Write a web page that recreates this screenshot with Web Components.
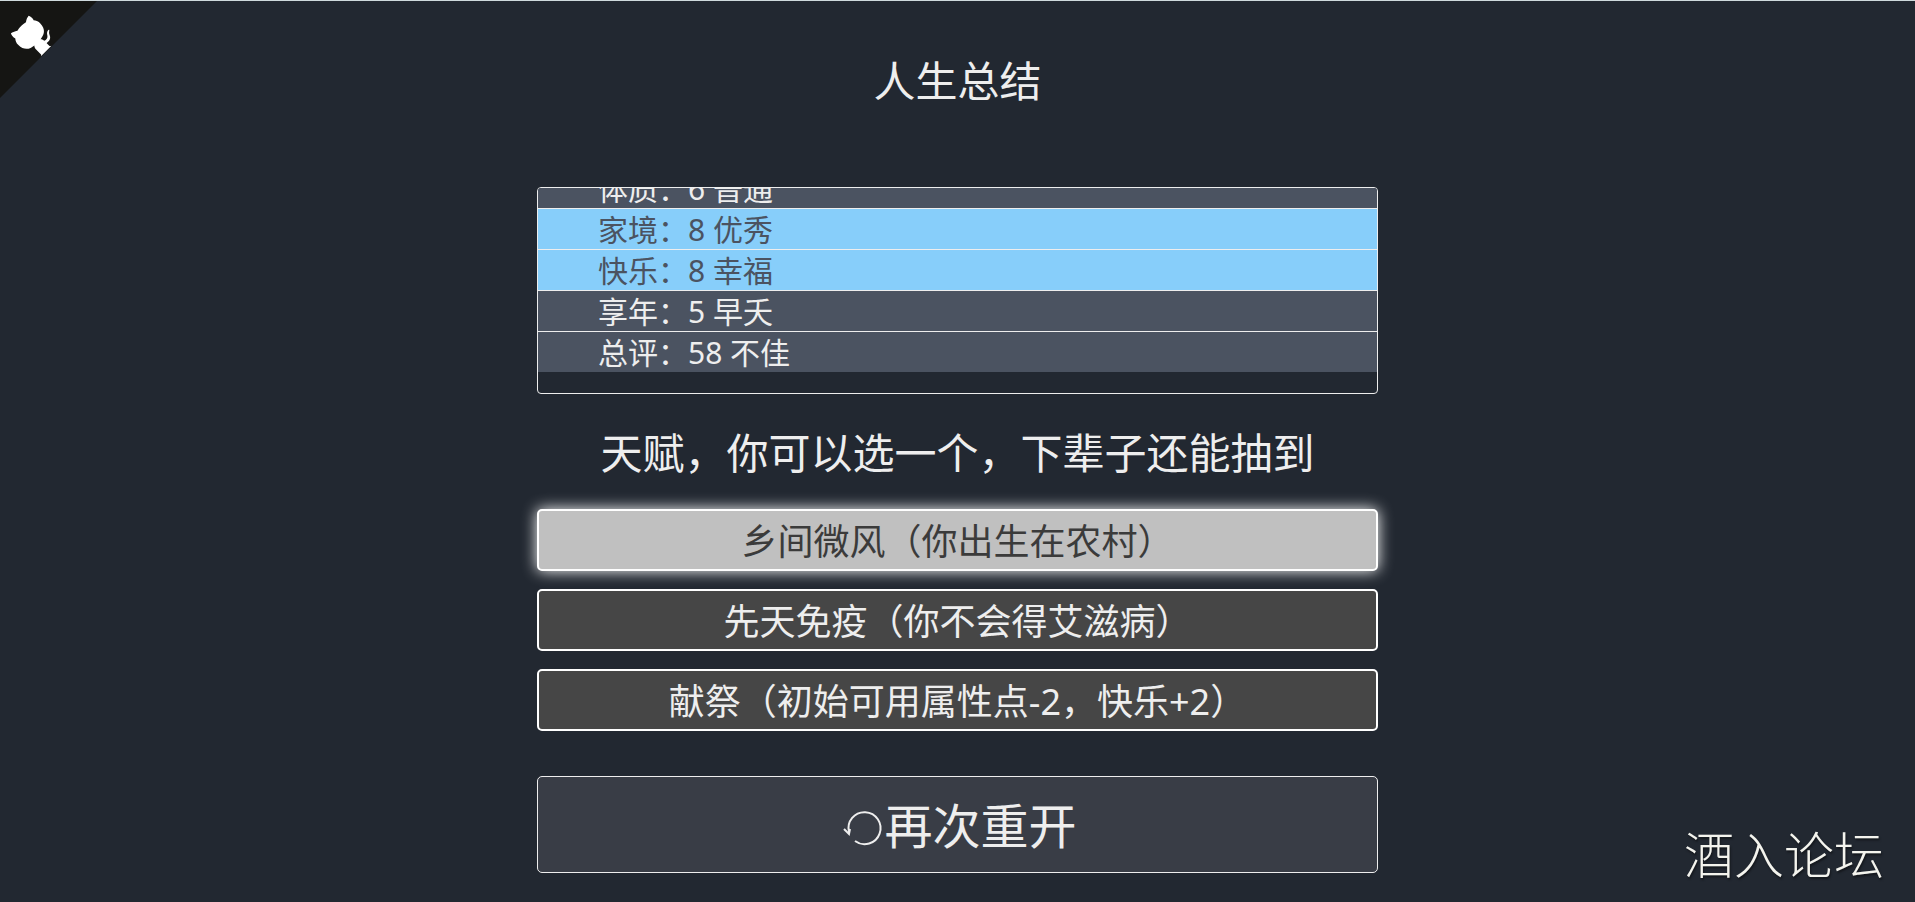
<!DOCTYPE html>
<html lang="zh-CN">
<head>
<meta charset="utf-8">
<meta name="viewport" content="width=device-width, initial-scale=1">
<title>人生重开模拟器</title>
<style>
html { background: #222831; }
body { margin: 0; color: #eee; font-family: "Noto Sans", "Noto Sans CJK SC", sans-serif; }
</style>
</head>
<body>
<life-summary>
  <corner-link slot="corner"></corner-link>
  <span slot="title">人生总结</span>
  <stat-list slot="stats">
    <stat-row>体质：6 普通</stat-row>
    <stat-row grade="1">家境：8 优秀</stat-row>
    <stat-row grade="1">快乐：8 幸福</stat-row>
    <stat-row>享年：5 早夭</stat-row>
    <stat-row>总评：58 不佳</stat-row>
  </stat-list>
  <span slot="hint">天赋，你可以选一个，下辈子还能抽到</span>
  <talent-option slot="talents" selected>乡间微风（你出生在农村）</talent-option>
  <talent-option slot="talents">先天免疫（你不会得艾滋病）</talent-option>
  <talent-option slot="talents">献祭（初始可用属性点-2，快乐+2）</talent-option>
  <restart-button slot="action">再次重开</restart-button>
  <forum-mark slot="mark">酒入论坛</forum-mark>
</life-summary>
<script>
function define(name, html, setup) {
  const template = document.createElement('template');
  template.innerHTML = html;
  customElements.define(name, class extends HTMLElement {
    constructor() {
      super();
      this.attachShadow({ mode: 'open' }).append(template.content.cloneNode(true));
    }
    connectedCallback() { if (setup) setup(this); }
  });
}

define('life-summary', `
<style>
:host { display: block; position: relative; box-sizing: border-box; min-height: 100vh; border-top: 1px solid #cfdadd; }
main { display: flex; flex-direction: column; width: 44%; min-width: 320px; max-width: 841px; margin: 0 auto; padding: 50px 0 28px; }
h1, h2 { margin: 0; font-size: 42px; font-weight: 400; line-height: 60px; text-align: center; white-space: nowrap; }
h1 { margin-bottom: 76px; }
h2 { margin: 29px 0 26px; display: flex; justify-content: center; }
.talents { display: flex; flex-direction: column; gap: 18px; margin-bottom: 45px; }
.corner { position: absolute; top: 0; left: 0; }
.mark { position: absolute; right: 31px; bottom: 20px; }
</style>
<div class="corner"><slot name="corner"></slot></div>
<main>
  <h1><slot name="title"></slot></h1>
  <slot name="stats"></slot>
  <h2><slot name="hint"></slot></h2>
  <div class="talents"><slot name="talents"></slot></div>
  <slot name="action"></slot>
</main>
<div class="mark"><slot name="mark"></slot></div>`);

define('corner-link', `
<style>
:host { display: block; }
a { display: block; color: #fff; }
svg { display: block; width: 97px; height: 97px; fill: #151513; transform: scale(-1, 1); }
</style>
<a href="https://github.com/" aria-label="GitHub">
<svg viewBox="0 0 250 250" aria-hidden="true">
<path d="M0,0 L250,250 L250,0 Z"/>
<g fill="#fff" transform="translate(-1 -3) scale(1.03)">
<path d="M128.3,109.0 C113.8,99.7 119.0,89.6 119.0,89.6 C122.0,82.7 120.5,78.6 120.5,78.6 C119.2,72.0 123.4,76.3 123.4,76.3 C127.3,80.9 125.5,87.3 125.5,87.3 C122.9,97.6 130.6,101.9 134.4,103.2"/>
<path d="M115.0,115.0 C114.9,115.1 118.7,116.5 119.8,115.4 L133.7,101.6 C136.9,99.2 139.9,98.4 142.2,98.6 C133.8,88.0 127.5,74.4 143.8,58.0 C148.5,53.4 154.0,51.2 159.7,51.0 C160.3,49.4 163.2,43.6 171.4,40.1 C171.4,40.1 176.1,42.5 178.8,56.2 C183.1,58.6 187.2,61.8 190.9,65.4 C194.5,69.0 197.7,73.2 200.1,77.6 C213.8,80.2 216.3,84.9 216.3,84.9 C212.7,93.1 206.9,96.0 205.4,96.6 C205.1,102.4 203.0,107.8 198.3,112.5 C181.9,128.9 168.3,122.5 157.7,114.1 C157.9,116.9 156.7,120.9 152.7,124.9 L141.0,136.5 C139.8,137.7 141.6,141.9 141.8,141.8 Z"/>
</g>
</svg></a>`);

define('stat-list', `
<style>
:host { display: block; }
div { display: flex; flex-direction: column; justify-content: flex-end; box-sizing: border-box; height: 207px; padding-bottom: 21px; overflow: hidden; border: 1px solid #eee; border-radius: 4px; }
</style>
<div role="list"><slot></slot></div>`);

define('stat-row', `
<style>
:host { display: block; flex: none; padding: 2px 0 0 60px; border-top: 1px solid #eee; background: #4b5361; font-size: 30px; line-height: 38px; height: 38px; white-space: nowrap; }
:host([grade="1"]) { background: #87cefa; color: #4b5361; }
</style>
<slot></slot>`, el => el.setAttribute('role', 'listitem'));

define('talent-option', `
<style>
:host { display: block; }
button { display: block; box-sizing: border-box; width: 100%; height: 62px; padding: 4px 0 0; border: 2px solid #fff; border-radius: 5px; background: #464646; color: #eee; font: inherit; font-size: 36px; line-height: 54px; white-space: nowrap; cursor: pointer; }
:host([selected]) button { background: #c0c0c0; color: #3b3b3b; box-shadow: 0 0 15px #fff; }
</style>
<button type="button"><slot></slot></button>`, el => {
  const button = el.shadowRoot.querySelector('button');
  button.setAttribute('aria-pressed', el.hasAttribute('selected'));
  button.onclick = () => {
    for (const other of el.parentElement.querySelectorAll('talent-option')) {
      other.toggleAttribute('selected', other === el);
      other.shadowRoot.querySelector('button').setAttribute('aria-pressed', other === el);
    }
  };
});

define('restart-button', `
<style>
:host { display: block; }
button { display: flex; align-items: center; justify-content: center; box-sizing: border-box; width: 100%; height: 97px; padding: 2px 0 0 2px; border: 1px solid #eee; border-radius: 5px; background: #393d46; color: #eee; font: inherit; font-size: 48px; line-height: 70px; white-space: nowrap; cursor: pointer; }
svg { display: block; width: 44px; height: 48px; fill: none; stroke: currentColor; stroke-width: 2; }
</style>
<button type="button"><svg viewBox="0 0 44 48" aria-hidden="true">
<path d="M15 39 A16 16 0 1 0 9 30"/><path d="M4 27 L9 32 L10 27"/>
</svg><slot></slot></button>`);

define('forum-mark', `
<style>
:host { display: block; color: #f4f4ee; font-family: "Noto Sans CJK SC", sans-serif; font-size: 50px; font-weight: 300; line-height: 60px; text-shadow: 1px 2px 2px #14171c; white-space: nowrap; }
</style>
<slot></slot>`);
</script>
</body>
</html>
